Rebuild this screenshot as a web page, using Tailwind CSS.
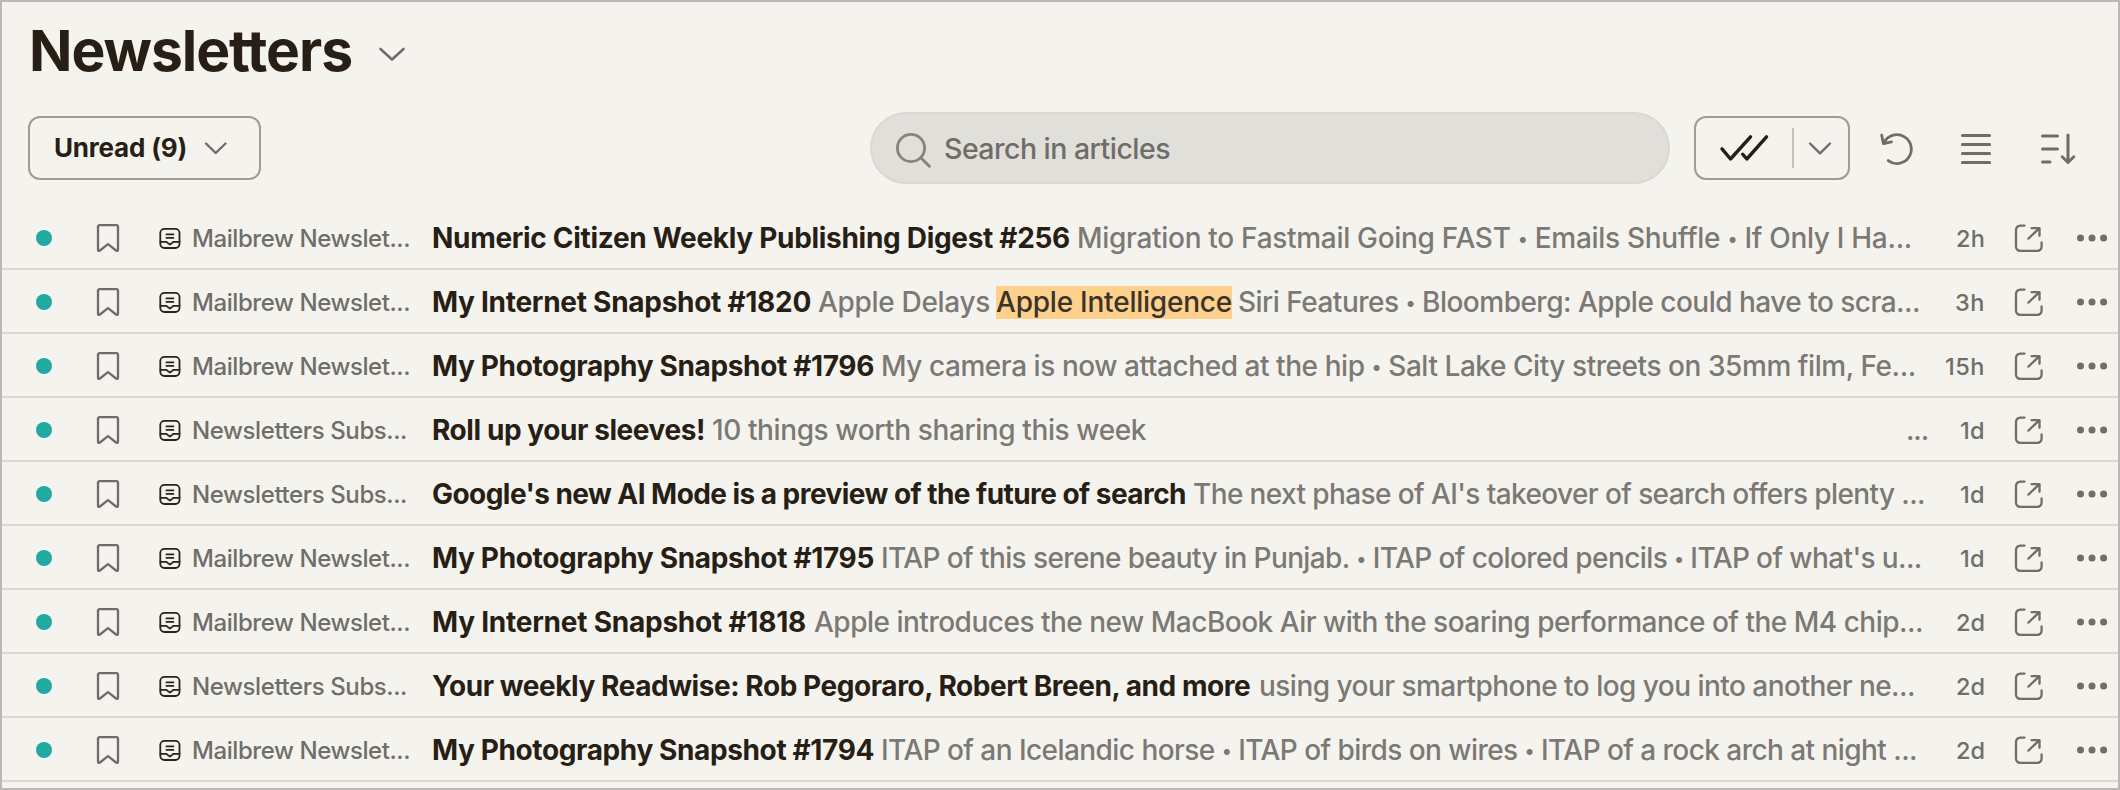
<!DOCTYPE html>
<html lang="en">
<head>
    <meta charset="UTF-8">
    <meta name="viewport" content="width=device-width, initial-scale=1.0">
    <title>Newsletters</title>
    <script src="https://cdn.jsdelivr.net/npm/@tailwindcss/browser@4"></script>
</head>
<body class="bg-[#f5f3ee] font-['Inter',sans-serif] font-[450] text-[#271f16]">
    <div class="flex h-[790px] w-[2120px] flex-col overflow-hidden border-2 border-[#b9b8b4]">
        <!-- Title -->
        <header class="flex h-[114px] items-start gap-[26px] pl-[27px] pt-[13px]">
            <h1 class="whitespace-nowrap text-[57px] font-bold leading-[72px] [font-feature-settings:'calt'_0,'liga'_0]" data-font="700 57px Inter" data-width="323">Newsletters</h1>
            <svg class="mt-[31px] h-[16px] w-[28px]" viewBox="0 0 28 16" fill="none" stroke="#6f6d69" stroke-width="2.6" stroke-linecap="round" stroke-linejoin="round"><path d="M2.5 3 14 13.5 25.5 3"/></svg>
        </header>

        <!-- Toolbar -->
        <div class="flex h-[64px] shrink-0 items-center pl-[26px]">
            <button class="flex h-[64px] w-[233px] items-center gap-[16px] rounded-xl border-2 border-[#a39a95] pl-[24px]">
                <span class="whitespace-nowrap text-left text-[26px] font-bold leading-8" data-font="700 26px Inter" data-width="133">Unread (9)</span>
                <svg class="h-[16px] w-[26px]" viewBox="0 0 26 16" fill="none" stroke="#6f6d69" stroke-width="2.4" stroke-linecap="round" stroke-linejoin="round"><path d="M3 3.5 12.7 13 22.5 3.5"/></svg>
            </button>
            <div class="ml-[609px] flex h-[72px] w-[800px] items-center gap-[13px] rounded-full border-2 border-[#d9d8d3] bg-[#e0dfda] pl-[22px]">
                <svg class="h-[40px] w-[37px]" viewBox="0 0 37 40" fill="none" stroke="#8a8178" stroke-width="2.8" stroke-linecap="round"><circle cx="17" cy="20" r="13.6"/><path d="m27 30 8.4 8.2"/></svg>
                <span class="whitespace-nowrap pt-[2px] text-[28.5px] leading-9 text-[#6f6d68]" data-font="450 28.5px Inter" data-width="226">Search in articles</span>
            </div>
            <div class="ml-[24px] flex h-[64px] w-[156px] items-center rounded-xl border-2 border-[#a39a95]">
                <svg class="ml-[22px] h-[32px] w-[52px]" viewBox="0 0 52 32" fill="none" stroke="#271f16" stroke-width="3.4" stroke-linecap="round" stroke-linejoin="round"><path d="M4 16.8 12.5 27 32.5 4.8M24.6 22.2l4.2 4.8L48.5 4.8"/></svg>
                <span class="ml-[22px] h-[40px] w-[2px] bg-[#c3c0b9]"></span>
                <svg class="ml-[13px] h-[16px] w-[26px]" viewBox="0 0 26 16" fill="none" stroke="#6f6d69" stroke-width="2.4" stroke-linecap="round" stroke-linejoin="round"><path d="M3 3.5 13 13.3 23 3.5"/></svg>
            </div>
            <svg class="ml-[28px] h-[40px] w-[36px]" viewBox="0 0 36 40" fill="none" stroke="#6f6d66" stroke-width="2.8" stroke-linecap="round" stroke-linejoin="round"><path d="M10.2 32.6A14.4 14.4 0 1 0 6.3 14.2M3.7 7.2 5.4 15.6 13.6 13.8"/></svg>
            <svg class="ml-[45px] h-[34px] w-[34px]" viewBox="0 0 34 34" stroke="#6f6d66" stroke-width="3" stroke-linecap="round"><path d="M3.4 4.4h27.2M3.4 13.4h27.2M3.4 22.4h27.2M3.4 31.4h27.2"/></svg>
            <svg class="ml-[46px] h-[36px] w-[38px]" viewBox="0 0 38 36" fill="none" stroke="#6f6d66" stroke-width="3" stroke-linecap="round" stroke-linejoin="round"><path d="M3.5 6h15M3.5 19h15M3.5 32h7.5M29 5v26.5M23.2 26.8 29 32.5l5.8-5.7"/></svg>
        </div>

        <!-- Article list -->
        <main id="list" class="mt-[26px] shrink-0"></main>
    </div>

    <script>
        // [feed, feed width, title, title width, gap, excerpt runs, age, age width]
        // an excerpt run is [text, width, highlighted]
        const articles = [
            ['Mailbrew Newslet...', 218, 'Numeric Citizen Weekly Publishing Digest #256', 638, 7, [['Migration to Fastmail Going FAST • Emails Shuffle • If Only I Ha...', 835]], '2h', 29],
            ['Mailbrew Newslet...', 218, 'My Internet Snapshot #1820', 379, 7, [['Apple Delays', 172], ['Apple Intelligence', 236, true], ['Siri Features • Bloomberg: Apple could have to scra...', 682]], '3h', 30],
            ['Mailbrew Newslet...', 218, 'My Photography Snapshot #1796', 442, 7, [['My camera is now attached at the hip • Salt Lake City streets on 35mm film, Fe...', 1035]], '15h', 40],
            ['Newsletters Subs...', 215, 'Roll up your sleeves!', 273, 7, [['10 things worth sharing this week', 434]], '1d', 25],
            ['Newsletters Subs...', 215, "Google's new AI Mode is a preview of the future of search", 754, 7, [["The next phase of AI's takeover of search offers plenty ...", 732]], '1d', 25],
            ['Mailbrew Newslet...', 218, 'My Photography Snapshot #1795', 442, 7, [["ITAP of this serene beauty in Punjab. • ITAP of colored pencils • ITAP of what's u...", 1041]], '1d', 25],
            ['Mailbrew Newslet...', 218, 'My Internet Snapshot #1818', 374, 8, [['Apple introduces the new MacBook Air with the soaring performance of the M4 chip...', 1109]], '2d', 29],
            ['Newsletters Subs...', 215, 'Your weekly Readwise: Rob Pegoraro, Robert Breen, and more', 820, 7, [['using your smartphone to log you into another ne...', 656]], '2d', 29],
            ['Mailbrew Newslet...', 218, 'My Photography Snapshot #1794', 442, 7, [['ITAP of an Icelandic horse • ITAP of birds on wires • ITAP of a rock arch at night ...', 1036]], '2d', 29],
        ];

        const dots = text => text.replaceAll('•', '<span class="align-[2px] text-[19px] leading-none">•</span>');

        const excerpt = runs => runs.map(([text, width, marked]) => marked
            ? `<mark class="mx-[6px] h-[33px] shrink-0 whitespace-nowrap bg-[#fed18d] leading-[33px] text-[#3b342b]" data-font="450 28px Inter" data-width="${width}">${text}</mark>`
            : `<span class="shrink-0 whitespace-nowrap" data-font="450 28px Inter" data-width="${width}">${dots(text)}</span>`).join('');

        document.getElementById('list').innerHTML = articles.map(([feed, feedWidth, title, titleWidth, gap, runs, age, ageWidth], i) => `
            <article class="flex h-[64px] items-center border-b-2 border-[#d9d8d3] pt-[2px]">
                <span class="ml-[34px] size-[16px] shrink-0 rounded-full bg-[#20aaa3]"></span>
                <svg class="ml-[43px] h-[30px] w-[26px] shrink-0" viewBox="0 0 26 30" fill="none" stroke="#6f6d69" stroke-width="2.3" stroke-linejoin="round"><path d="M4.5 2.2h17a1.5 1.5 0 0 1 1.5 1.5v23c0 1.2-1 1.5-1.9.8L13 21.2 4.9 27.5c-.9.7-1.9.4-1.9-.8v-23a1.5 1.5 0 0 1 1.5-1.5z"/></svg>
                <svg class="ml-[37px] h-[24px] w-[24px] shrink-0" viewBox="0 0 24 24" fill="none" stroke="#2b2319" stroke-width="1.8" stroke-linecap="round" stroke-linejoin="round"><rect x="2.3" y="2.8" width="19.2" height="19.2" rx="4.2"/><path d="M8.4 8.4h7M8.4 11.8h7M2.4 15.8h5.8l3.7 2.8 3.7-2.8h5.8"/></svg>
                <span class="ml-[10px] w-[240px] shrink-0 whitespace-nowrap pt-px text-[24px] leading-8 text-[#706e69]"><span class="inline-block" data-font="450 24px Inter" data-width="${feedWidth}">${feed}</span></span>
                <div class="flex w-[1496px] shrink-0 items-center text-[28px] leading-9 text-[#7b7974]">
                    <span class="shrink-0 whitespace-nowrap font-bold text-[#271f16]" data-font="700 28px Inter" data-width="${titleWidth}">${title}</span>
                    <span style="width:${gap}px" class="shrink-0"></span>
                    ${excerpt(runs)}
                    ${i === 3 ? '<span class="ml-auto" data-font="450 28px Inter" data-width="22">...</span>' : ''}
                </div>
                <span class="flex w-[57px] shrink-0 justify-end whitespace-nowrap pt-px text-[23.5px] leading-8 text-[#706e69]"><span data-font="450 23.5px Inter" data-width="${ageWidth}">${age}</span></span>
                <svg class="ml-[27px] h-[32px] w-[32px] shrink-0" viewBox="0 0 32 32" fill="none" stroke="#706e69" stroke-width="2.3" stroke-linecap="round" stroke-linejoin="round"><path d="M12.5 3.6H8.2A4.2 4.2 0 0 0 4 7.8v16.8a4.2 4.2 0 0 0 4.2 4.2h17.2a4.2 4.2 0 0 0 4.2-4.2v-4.1M16.4 16.6 27.2 6.3M19.6 6.2h7.9v7.6"/></svg>
                <svg class="ml-[32px] h-[10px] w-[32px] shrink-0" viewBox="0 0 32 10" fill="#706e69"><circle cx="4.5" cy="5" r="3.5"/><circle cx="16" cy="5" r="3.5"/><circle cx="27.6" cy="5" r="3.5"/></svg>
            </article>`).join('');

        const ctx = document.createElement('canvas').getContext('2d');
        document.querySelectorAll('[data-width]').forEach(el => {
            ctx.font = el.dataset.font;
            const width = Number(el.dataset.width);
            const bullets = el.querySelectorAll('span').length;
            // bullets are set at 19px inside 28px text
            const natural = ctx.measureText(el.textContent).width - bullets * ctx.measureText('•').width * 9 / 28;
            el.style.letterSpacing = (width - natural) / el.textContent.length + 'px';
            el.style.width = width + 'px';
        });
    </script>
</body>
</html>
